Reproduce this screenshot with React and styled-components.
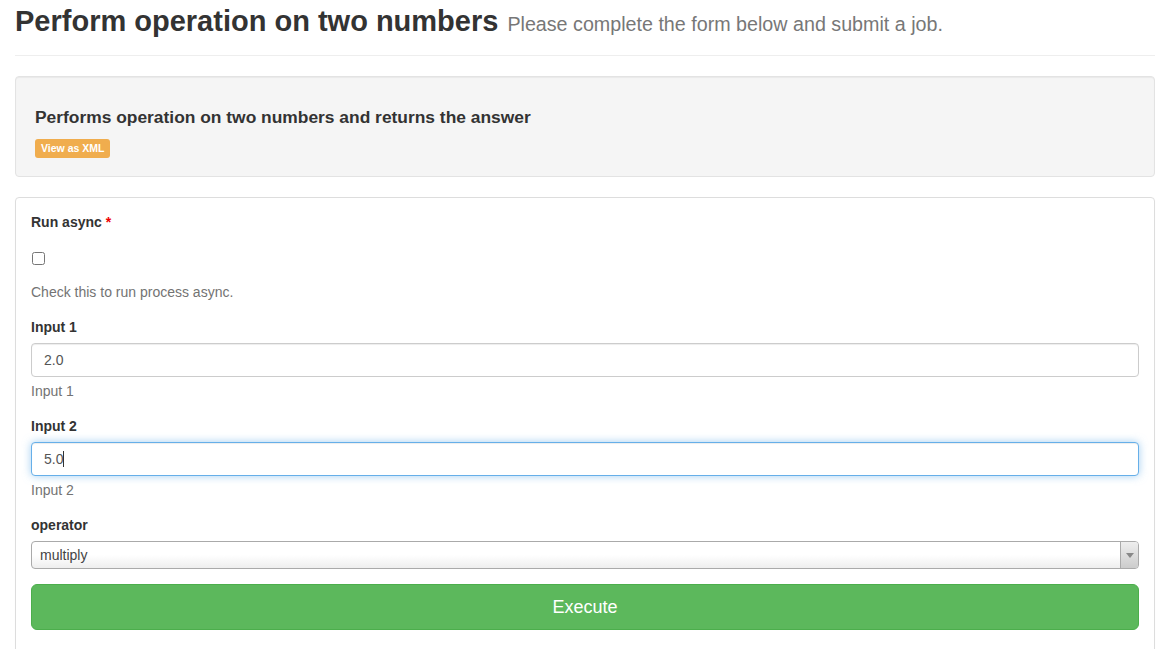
import React from "react";
import styled, { createGlobalStyle } from "styled-components";

const Global = createGlobalStyle`
  html, body { margin: 0; padding: 0; background: #fff; }
  body {
    font-family: "Liberation Sans", Arial, Helvetica, sans-serif;
    font-size: 14px;
    line-height: 1.42857;
    color: #333;
  }
  * { box-sizing: border-box; }
`;

const Page = styled.div`
  padding: 0 9px 0 15px;
`;

const PageHeader = styled.div`
  padding: 5px 0 9px;
  margin-bottom: 20px;
  border-bottom: 1px solid #eee;
`;

const Title = styled.h1`
  margin: 0 0 8px;
  height: 33px;
  font-size: 29px;
  line-height: 33px;
  font-weight: 700;
  color: #333;
  white-space: nowrap;
`;

const Subtitle = styled.small`
  font-size: 19.7px;
  line-height: 1;
  font-weight: 400;
  color: #777;
  margin-left: 9px;
`;

const Well = styled.div`
  background: #f5f5f5;
  border: 1px solid #e3e3e3;
  border-radius: 4px;
  padding: 19px;
  margin-bottom: 20px;
  box-shadow: inset 0 1px 1px rgba(0, 0, 0, 0.05);
`;

const WellTitle = styled.h4`
  margin: 11px 0 9px;
  font-size: 17.4px;
  line-height: 21px;
  font-weight: 700;
  color: #333;
`;

const BadgeRow = styled.div`
  height: 20px;
`;

const Badge = styled.span`
  display: inline-block;
  background: #f0ad4e;
  color: #fff;
  font-size: 10.5px;
  font-weight: bold;
  line-height: 11px;
  padding: 4px 6px;
  border-radius: 3px;
  margin-top: 2px;
  vertical-align: top;
`;

const Panel = styled.div`
  border: 1px solid #ddd;
  border-radius: 4px;
  box-shadow: 0 1px 1px rgba(0, 0, 0, 0.05);
  padding: 15px;
  min-height: 480px;
`;

const FormGroup = styled.div`
  margin-bottom: 15px;
`;

const Label = styled.label`
  display: block;
  font-weight: bold;
  margin-bottom: 5px;
`;

const Required = styled.span`
  color: #e00;
`;

const CheckboxRow = styled.div`
  display: flex;
  align-items: center;
  height: 20px;
  margin: 15px 0;
  padding-top: 1px;
  input { margin: 0 0 0 1px; width: 13px; height: 13px; }
`;

const Help = styled.p`
  margin: 5px 0 10px;
  color: #737373;
`;

const InputWrap = styled.div`
  position: relative;
`;

const Input = styled.input`
  display: block;
  width: 100%;
  height: 34px;
  padding: 6px 12px;
  font-family: inherit;
  font-size: 14px;
  color: #555;
  background: #fff;
  border: 1px solid ${(p) => (p.$focused ? "#66afe9" : "#ccc")};
  border-radius: 4px;
  outline: none;
  box-shadow: ${(p) =>
    p.$focused
      ? "inset 0 1px 1px rgba(0,0,0,.075), 0 0 8px rgba(102,175,233,.6)"
      : "inset 0 1px 1px rgba(0,0,0,.075)"};
`;

const Caret = styled.span`
  position: absolute;
  left: 32px;
  top: 9px;
  width: 1px;
  height: 16px;
  background: #333;
`;

const Select = styled.div`
  display: flex;
  height: 28px;
  border: 1px solid #aaa;
  border-radius: 4px;
  background: linear-gradient(to bottom, #fff 0%, #fff 50%, #eee 100%);
  overflow: hidden;
`;

const SelectValue = styled.span`
  flex: 1;
  padding-left: 8px;
  line-height: 26px;
  color: #444;
  font-size: 14px;
`;

const SelectArrow = styled.span`
  width: 18px;
  border-left: 1px solid #aaa;
  background: linear-gradient(to bottom, #eee 0%, #ccc 100%);
  display: flex;
  align-items: center;
  justify-content: center;
  &::after {
    content: "";
    border-left: 4px solid transparent;
    border-right: 4px solid transparent;
    border-top: 5px solid #888;
    margin-top: 1px;
  }
`;

const Button = styled.button`
  display: block;
  width: 100%;
  height: 46px;
  padding: 10px 16px;
  font-family: inherit;
  font-size: 18px;
  line-height: 24px;
  color: #fff;
  background: #5cb85c;
  border: 1px solid #4cae4c;
  border-radius: 6px;
  cursor: pointer;
`;

export default function App() {
  return (
    <Page>
      <Global />
      <PageHeader>
        <Title>
          Perform operation on two numbers
          <Subtitle>Please complete the form below and submit a job.</Subtitle>
        </Title>
      </PageHeader>
      <Well>
        <WellTitle>Performs operation on two numbers and returns the answer</WellTitle>
        <BadgeRow>
          <Badge>View as XML</Badge>
        </BadgeRow>
      </Well>
      <Panel>
        <FormGroup>
          <Label>
            Run async <Required>*</Required>
          </Label>
          <CheckboxRow>
            <input type="checkbox" />
          </CheckboxRow>
          <Help>Check this to run process async.</Help>
        </FormGroup>
        <FormGroup>
          <Label>Input 1</Label>
          <Input readOnly value="2.0" />
          <Help>Input 1</Help>
        </FormGroup>
        <FormGroup>
          <Label>Input 2</Label>
          <InputWrap>
            <Input readOnly value="5.0" $focused />
            <Caret />
          </InputWrap>
          <Help>Input 2</Help>
        </FormGroup>
        <FormGroup>
          <Label>operator</Label>
          <Select>
            <SelectValue>multiply</SelectValue>
            <SelectArrow />
          </Select>
        </FormGroup>
        <Button>Execute</Button>
      </Panel>
    </Page>
  );
}
